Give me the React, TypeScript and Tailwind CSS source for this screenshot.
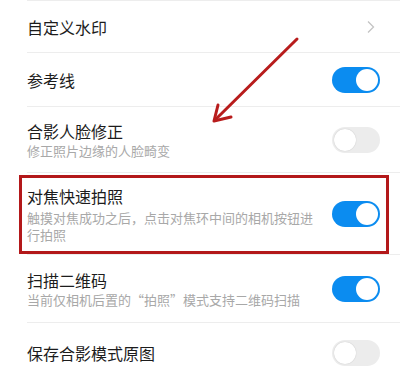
import React from 'react';

type Row = { title: string; sub?: string[]; kind: 'chevron' | 'on' | 'off'; h: number };

const rows: Row[] = [
  { title: '自定义水印', kind: 'chevron', h: 53 },
  { title: '参考线', kind: 'on', h: 54 },
  { title: '合影人脸修正', sub: ['修正照片边缘的人脸畸变'], kind: 'off', h: 66 },
  { title: '对焦快速拍照', sub: ['触摸对焦成功之后，点击对焦环中间的相机按钮进', '行拍照'], kind: 'on', h: 82 },
  { title: '扫描二维码', sub: ['当前仅相机后置的“拍照”模式支持二维码扫描'], kind: 'on', h: 68 },
  { title: '保存合影模式原图', kind: 'off', h: 60 },
];

function Toggle({ on }: { on: boolean }) {
  return on ? (
    <div className="w-[48px] h-[26px] rounded-full bg-[#0b8cf0] flex items-center justify-end pr-[2px]">
      <div className="w-[22px] h-[22px] rounded-full bg-white" />
    </div>
  ) : (
    <div className="w-[48px] h-[26px] rounded-full bg-[#ececec] flex items-center pl-[2px]">
      <div className="w-[22px] h-[22px] rounded-full bg-white shadow-[0_0_1px_rgba(0,0,0,0.25)]" />
    </div>
  );
}

export default function App() {
  return (
    <div
      className="relative w-[400px] h-[376px] overflow-hidden bg-white"
      style={{ fontFamily: '"Noto Sans CJK SC", "Noto Sans", sans-serif' }}
    >
      <div className="pl-[27px]">
        {rows.map((r, i) => (
          <div
            key={i}
            className={`relative flex items-center justify-between pr-[20px] border-b border-[#ededed] ${i === 0 ? 'border-t' : ''}`}
            style={{ height: r.h }}
          >
            <div className="flex flex-col">
              <div className="text-[16px] leading-[22px] text-[#1c1c1c]">{r.title}</div>
              {r.sub?.map((s, j) => (
                <div key={j} className={`text-[13px] leading-[17px] text-[#a8a8a8] ${j === 0 && r.sub!.length > 1 ? 'mt-[2px]' : ''}`}>{s}</div>
              ))}
            </div>
            {r.kind === 'chevron' ? (
              <svg width="10" height="14" viewBox="0 0 10 14" className="mr-[4px]">
                <path d="M2 1.5 L7.5 7 L2 12.5" fill="none" stroke="#c4c4c4" strokeWidth="1.3" />
              </svg>
            ) : (
              <Toggle on={r.kind === 'on'} />
            )}
            {i === 3 && (
              <div className="absolute left-[-8px] right-[11px] top-[2px] bottom-[0px] border-[3px] border-[#b3181a]" />
            )}
          </div>
        ))}
      </div>
      <svg className="absolute left-0 top-0 pointer-events-none" width="400" height="376">
        <g stroke="#b81c1c" strokeWidth="3" strokeLinecap="round" fill="none">
          <line x1="297" y1="39" x2="216" y2="119" />
          <polyline points="218,105 214,121 231,117" strokeLinejoin="round" />
        </g>
      </svg>
    </div>
  );
}
